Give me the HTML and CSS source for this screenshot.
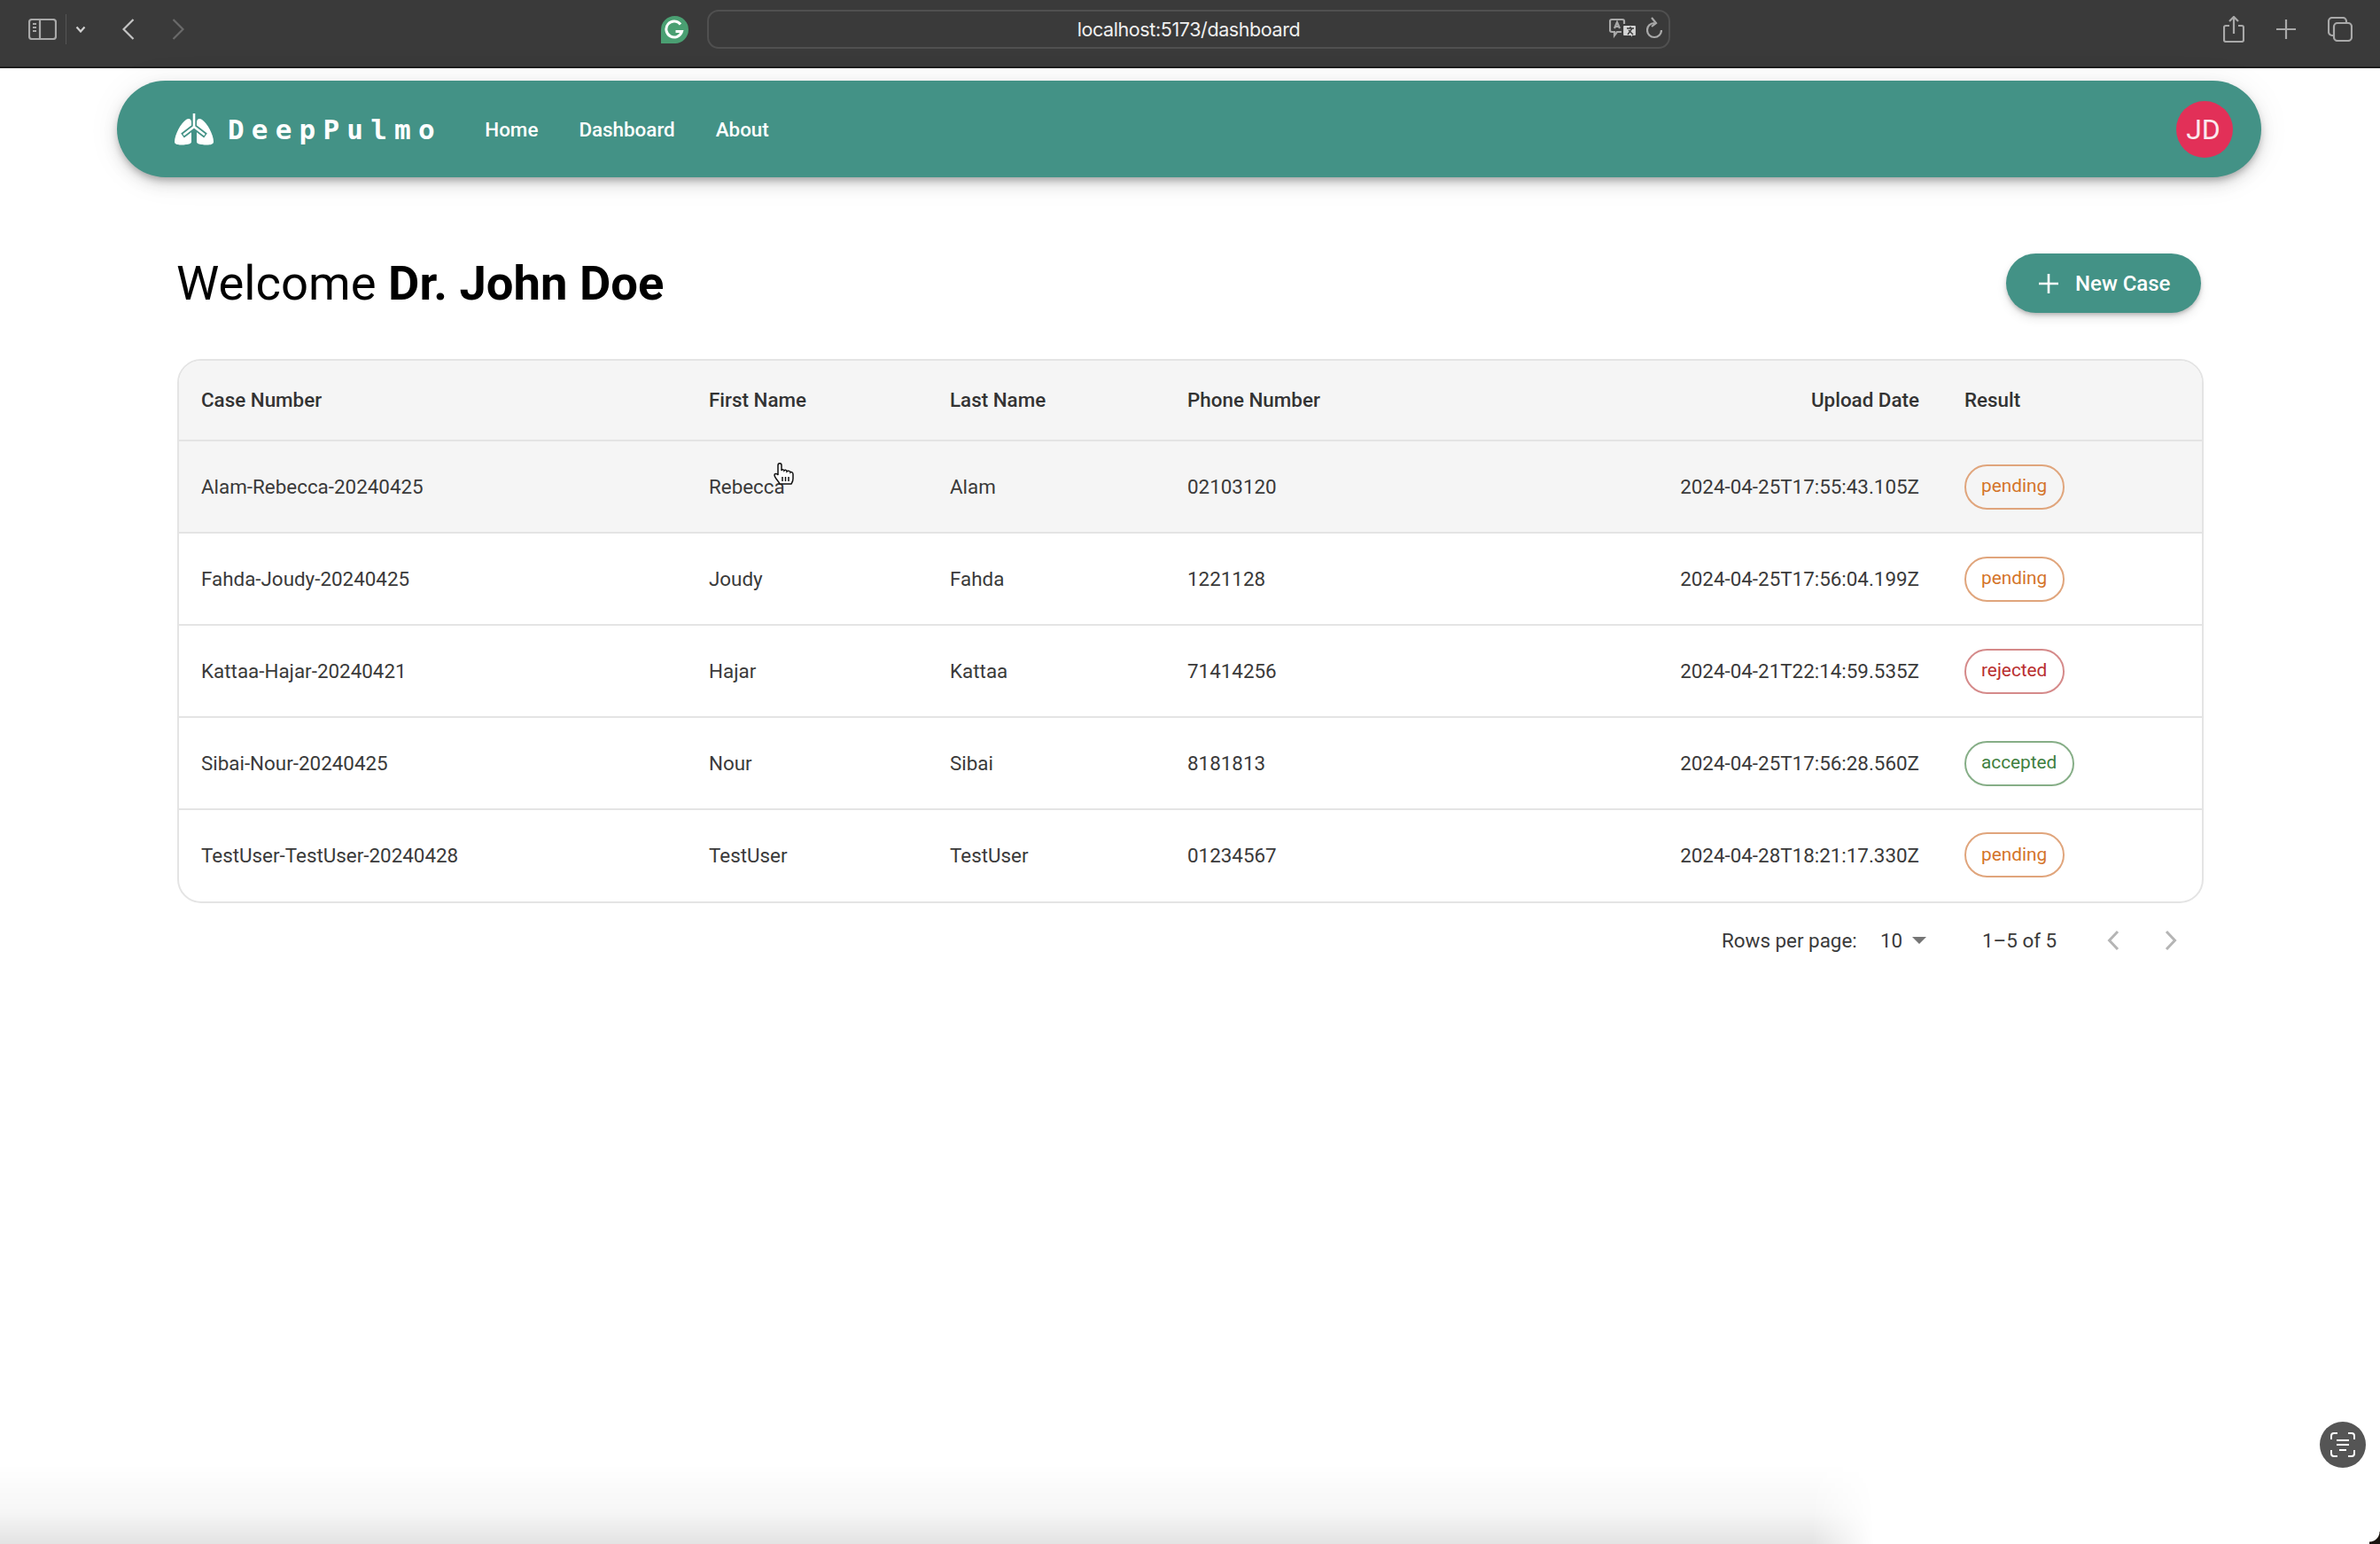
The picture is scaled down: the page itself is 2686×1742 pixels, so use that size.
FILE: index.html
```html
<!DOCTYPE html>
<html lang="en">
<head>
<meta charset="utf-8">
<title>DeepPulmo Dashboard</title>
<link rel="stylesheet" href="styles.css">
</head>
<body>
<header class="browser">
  <div class="browser-left">
    <svg class="ic sidebar-ic" width="32" height="24" viewBox="0 0 32 24"><rect x="1" y="1" width="30" height="22" rx="3"/><path d="M13 1v22M5 6h4M5 10h4M5 14h4"/></svg>
    <span class="tool-sep"></span>
    <svg class="ic caret-ic" width="12" height="8" viewBox="0 0 12 8"><path d="M1.500 1.500 6 6.500l4.500-5"/></svg>
    <svg class="ic back-ic" width="14" height="24" viewBox="0 0 14 24"><path d="M12.500 1 1.500 12l11 11"/></svg>
    <svg class="ic fwd-ic" width="14" height="24" viewBox="0 0 14 24"><path d="M1.500 1l11 11-11 11"/></svg>
  </div>
  <div class="browser-center">
    <svg class="g-ic" width="31" height="31" viewBox="0 0 31 31"><path class="g-bg" d="M15.500 0a15.500 15.500 0 0 1 0 31H0V15.500A15.500 15.500 0 0 1 15.500 0z"/><path class="g-mark" d="M22 9.500a9 9 0 1 0 1.500 8h-7"/></svg>
    <div class="urlbar">
      <span class="url-text">localhost:5173/dashboard</span>
      <div class="url-icons">
        <svg class="ic" width="32" height="26" viewBox="0 0 32 26"><path d="M3 2h12a2 2 0 0 1 2 2v10a2 2 0 0 1-2 2H9l-3 4v-4H3a2 2 0 0 1-2-2V4a2 2 0 0 1 2-2zM6 12l3-7 3 7M7 10h4"/><path class="tr-fill" d="M17 8h12a2 2 0 0 1 2 2v9a2 2 0 0 1-2 2h-2v4l-3-4h-7a2 2 0 0 1-2-2v-9a2 2 0 0 1 2-2z"/><path class="tr-glyph" d="M20 12h8M24 10v2M21 19l5-7M27 19l-5-5"/></svg>
        <svg class="ic" width="18" height="28" viewBox="0 0 18 28"><path d="M9 7a8 8 0 1 0 8 8M6 1l5 6-5 4"/></svg>
      </div>
    </div>
  </div>
  <div class="browser-right">
    <svg class="ic" width="24" height="30" viewBox="0 0 24 30"><path d="M7 11H3a2 2 0 0 0-2 2v14a2 2 0 0 0 2 2h18a2 2 0 0 0 2-2V13a2 2 0 0 0-2-2h-4M12 20V2M7 6l5-5 5 5"/></svg>
    <svg class="ic" width="22" height="22" viewBox="0 0 22 22"><path d="M11 0v22M0 11h22"/></svg>
    <svg class="ic" width="28" height="28" viewBox="0 0 28 28"><path d="M6 21H5a4 4 0 0 1-4-4V5a4 4 0 0 1 4-4h12a4 4 0 0 1 4 4v1"/><rect x="7" y="7" width="20" height="20" rx="4"/></svg>
  </div>
</header>

<nav class="navbar">
  <a class="brand">
    <svg class="lungs" width="44" height="36" viewBox="0 0 44 36">
      <path class="lobe" d="M13 7c3-2 6-1 6 3v22c0 2-3 3-6 3-5 1-13 1-13-3C0 24 7 11 13 7z"/>
      <path class="lobe" d="M31 7c-3-2-6-1-6 3v22c0 2 3 3 6 3 5 1 13 1 13-3 0-8-7-21-13-25z"/>
      <path class="bronchi-gap" d="M22 0v15M22 15 9 25M22 15l13 10"/>
      <path class="bronchi" d="M22 0v15M22 15 11 23.500M22 15l11 8.500"/>
    </svg>
    <span class="brand-text">DeepPulmo</span>
  </a>
  <div class="nav-links">
    <a class="nav-link">Home</a>
    <a class="nav-link">Dashboard</a>
    <a class="nav-link">About</a>
  </div>
  <div class="avatar">JD</div>
</nav>

<main class="content">
  <div class="title-row">
    <h1 class="welcome">Welcome <strong>Dr. John Doe</strong></h1>
    <button class="new-case">
      <svg class="plus" width="22" height="22" viewBox="0 0 22 22"><path d="M11 0v22M0 11h22"/></svg>
      New Case
    </button>
  </div>

  <div class="table-wrap">
    <table class="cases">
      <colgroup>
        <col class="c-case"><col class="c-first"><col class="c-last"><col class="c-phone"><col class="c-date"><col class="c-result">
      </colgroup>
      <thead>
        <tr>
          <th>Case Number</th><th>First Name</th><th>Last Name</th><th>Phone Number</th><th class="right">Upload Date</th><th>Result</th>
        </tr>
      </thead>
      <tbody>
        <tr class="hovered">
          <td>Alam-Rebecca-20240425</td><td>Rebecca</td><td>Alam</td><td>02103120</td><td class="right">2024-04-25T17:55:43.105Z</td><td><span class="pill pending">pending</span></td>
        </tr>
        <tr>
          <td>Fahda-Joudy-20240425</td><td>Joudy</td><td>Fahda</td><td>1221128</td><td class="right">2024-04-25T17:56:04.199Z</td><td><span class="pill pending">pending</span></td>
        </tr>
        <tr>
          <td>Kattaa-Hajar-20240421</td><td>Hajar</td><td>Kattaa</td><td>71414256</td><td class="right">2024-04-21T22:14:59.535Z</td><td><span class="pill rejected">rejected</span></td>
        </tr>
        <tr>
          <td>Sibai-Nour-20240425</td><td>Nour</td><td>Sibai</td><td>8181813</td><td class="right">2024-04-25T17:56:28.560Z</td><td><span class="pill accepted">accepted</span></td>
        </tr>
        <tr>
          <td>TestUser-TestUser-20240428</td><td>TestUser</td><td>TestUser</td><td>01234567</td><td class="right">2024-04-28T18:21:17.330Z</td><td><span class="pill pending">pending</span></td>
        </tr>
      </tbody>
    </table>
  </div>

  <div class="pagination">
    <span class="rows-label">Rows per page:</span>
    <span class="rows-select">10<span class="select-caret"></span></span>
    <span class="range">1–5 of 5</span>
    <svg class="page-ic" width="14" height="24" viewBox="0 0 14 24"><path d="M12 2 2.500 12 12 22"/></svg>
    <svg class="page-ic" width="14" height="24" viewBox="0 0 14 24"><path d="M2 2l9.500 10L2 22"/></svg>
  </div>
</main>

<svg class="cursor" width="24" height="26" viewBox="0 0 24 26"><path d="M7 24c-1-3-6-7-6-10 0-2 3-2 4 0V3c0-3 4-3 4 0v6c1-2 3-1 3 0 1-1 3-1 3 1 1-1 4-1 4 1 1-1 3 0 3 2v5c0 3-1 4-2 6z"/><path d="M10 16v5M13.500 16v5M17 16v5"/></svg>

<div class="bottom-shade"></div>
<div class="scan-btn">
  <svg class="scan-ic" width="28" height="28" viewBox="0 0 28 28"><path d="M1 8V4a3 3 0 0 1 3-3h4M20 1h4a3 3 0 0 1 3 3v4M27 20v4a3 3 0 0 1-3 3h-4M8 27H4a3 3 0 0 1-3-3v-4M7 9h14M7 14h14M10 20h8"/></svg>
</div>
<div class="corner"></div>
</body>
</html>
```
FILE: styles.css
```css
* { box-sizing: border-box; }
html, body { margin: 0; padding: 0; }
body {
  position: relative;
  width: 2686px;
  height: 1742px;
  overflow: hidden;
  background: #fff;
  font-family: Roboto, "Liberation Sans", sans-serif;
  color: #3a3a3a;
}

/* Browser chrome */
.browser {
  height: 77px;
  background: #3a3a3a;
  border-bottom: 2px solid #1e1e1e;
  display: flex;
  align-items: center;
  padding: 0 31px 9px 32px;
}
.ic { fill: none; stroke: #a9a9a9; stroke-width: 2.2; display: block; flex: none; }
.browser-left { display: flex; align-items: center; width: 714px; }
.sidebar-ic { margin-right: 10px; }
.tool-sep { width: 1px; height: 34px; background: #555; margin-right: 10px; }
.caret-ic { stroke: #d0d0d0; margin-right: 41px; }
.back-ic { stroke: #c4c4c4; margin-right: 42px; }
.fwd-ic { stroke: #6a6a6a; }
.browser-center { display: flex; align-items: center; }
.g-ic { display: block; margin-right: 21px; }
.g-bg { fill: #4a9f72; }
.g-mark { fill: none; stroke: #fff; stroke-width: 3; }
.urlbar {
  position: relative;
  width: 1087px;
  height: 44px;
  border: 2px solid #505050;
  border-radius: 13px;
  display: flex;
  align-items: center;
  justify-content: center;
}
.url-text { color: #f0f0f0; font-size: 21.500px; font-family: Inter, Roboto, sans-serif; letter-spacing: -0.4px; }
.url-icons { position: absolute; right: 7px; top: 6px; display: flex; align-items: center; gap: 10px; }
.tr-fill { fill: #d4d4d4; stroke: #3a3a3a; }
.tr-glyph { stroke: #3a3a3a; stroke-width: 1.400; }
.browser-right { margin-left: auto; display: flex; align-items: center; gap: 36px; }

/* Nav */
.navbar {
  margin: 14px 134px 0 132px;
  height: 109px;
  border-radius: 55px;
  background: #439286;
  box-shadow: 0 5px 9px -2px rgba(0,0,0,.28), 0 8px 18px rgba(0,0,0,.12), 0 2px 40px rgba(0,0,0,.06);
  display: flex;
  align-items: center;
  padding: 0 32px 0 65px;
}
.brand { display: flex; align-items: center; }
.lungs { display: block; margin-right: 16px; }
.lobe { fill: #fff; }
.bronchi-gap { fill: none; stroke: #439286; stroke-width: 6; }
.bronchi { fill: none; stroke: #fff; stroke-width: 2.600; stroke-linecap: round; }
.brand-text {
  font-family: "DejaVu Sans Mono", "Liberation Mono", monospace;
  font-weight: 700;
  font-size: 31px;
  letter-spacing: 8.200px;
  color: #fff;
}
.nav-links { display: flex; align-items: center; gap: 46px; margin-left: 48.500px; }
.nav-link { color: #fff; font-size: 22.400px; font-weight: 500; }
.avatar {
  margin-left: auto;
  width: 64px;
  height: 64px;
  border-radius: 50%;
  background: #e23058;
  color: #fbe9ee;
  font-size: 32px;
  padding-right: 3px;
  display: flex;
  align-items: center;
  justify-content: center;
}

/* Content */
.content { padding: 0 199px 0 200px; }
.title-row {
  margin-top: 86px;
  padding-right: 3px;
  height: 67px;
  display: flex;
  align-items: center;
  justify-content: space-between;
}
.welcome { margin: 2px 0 0 -1px; font-size: 54.400px; font-weight: 400; color: #000; line-height: 1; }
.welcome strong { font-weight: 700; }
.new-case {
  height: 67px;
  width: 220px;
  border: 0;
  border-radius: 34px;
  background: #439286;
  color: #fff;
  font-family: inherit;
  font-size: 24px;
  font-weight: 500;
  display: flex;
  align-items: center;
  gap: 19px;
  padding: 0 0 0 37px;
  box-shadow: 0 3px 5px -1px rgba(0,0,0,.25), 0 6px 12px rgba(0,0,0,.1);
}
.plus { display: block; fill: none; stroke: #fff; stroke-width: 2.600; }

.table-wrap {
  margin-top: 52px;
  border: 2px solid #e4e4e4;
  border-radius: 27px;
  overflow: hidden;
}
.cases {
  width: 100%;
  table-layout: fixed;
  border-collapse: separate;
  border-spacing: 0;
  font-size: 22.400px;
}
.c-case { width: 573px; }
.c-first { width: 272px; }
.c-last { width: 268px; }
.c-phone { width: 400px; }
.c-date { width: 477px; }
.c-result { width: auto; }
.cases th, .cases td {
  padding: 0 0 0 25px;
  text-align: left;
  border-bottom: 2px solid #e4e4e4;
  white-space: nowrap;
}
.cases th { height: 91px; padding-bottom: 2px; background: #f5f5f5; font-weight: 500; color: #333; }
.cases td { height: 104px; font-weight: 400; }
.cases .right { text-align: right; padding-right: 26px; padding-left: 0; }
.cases tbody tr:last-child td { height: 103px; padding-bottom: 2px; border-bottom: 0; }
.hovered td { background: #f5f5f5; }

.pill {
  display: inline-flex;
  align-items: center;
  height: 51px;
  padding: 0 18px 2px 17px;
  border-radius: 26px;
  border-width: 2px;
  border-style: solid;
  font-size: 20.800px;
  vertical-align: middle;
}
.pending { color: #d4742a; border-color: #e0a57c; }
.rejected { color: #b92f2f; border-color: #d58a8a; }
.accepted { color: #3f7f3f; border-color: #86ae87; }

.pagination {
  height: 84px;
  display: flex;
  align-items: center;
  justify-content: flex-end;
  font-size: 22.400px;
  padding-right: 30px;
}
.rows-label { flex: none; width: 179px; }
.rows-select { flex: none; display: flex; align-items: center; width: 115px; }
.select-caret {
  margin-left: 11px;
  width: 0;
  height: 0;
  border-left: 8px solid transparent;
  border-right: 8px solid transparent;
  border-top: 8px solid #757575;
}
.range { flex: none; width: 141px; }
.page-ic { display: block; fill: none; stroke: #b5b5b5; stroke-width: 3; flex: none; }
.page-ic + .page-ic { margin-left: 51px; }

/* Overlays */
.cursor {
  position: absolute;
  left: 873px;
  top: 522px;
  fill: #fff;
  stroke: #111;
  stroke-width: 1.500;
}
.bottom-shade {
  position: absolute;
  left: 0;
  bottom: 0;
  width: 2115px;
  height: 90px;
  background: linear-gradient(to top, rgba(0,0,0,.11), rgba(0,0,0,.035) 40%, rgba(0,0,0,0));
  -webkit-mask-image: linear-gradient(to right, #000 2045px, transparent 2115px);
  mask-image: linear-gradient(to right, #000 2045px, transparent 2115px);
}
.scan-btn {
  position: absolute;
  left: 2618px;
  top: 1604px;
  width: 52px;
  height: 52px;
  border-radius: 50%;
  background: #555;
  display: flex;
  align-items: center;
  justify-content: center;
}
.scan-ic { display: block; fill: none; stroke: #fff; stroke-width: 2; }
.corner {
  position: absolute;
  right: 0;
  bottom: 0;
  width: 12px;
  height: 14px;
  background: radial-gradient(circle at 0 0, transparent 11px, #1b1410 12px);
}
```
